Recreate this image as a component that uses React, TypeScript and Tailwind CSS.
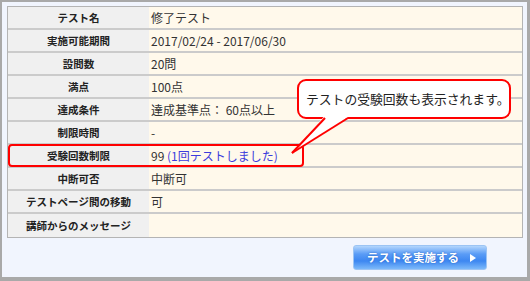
const ROWS: { label: string; value: React.ReactNode }[] = [
  { label: "テスト名", value: "修了テスト" },
  { label: "実施可能期間", value: "2017/02/24 - 2017/06/30" },
  { label: "設問数", value: "20問" },
  { label: "満点", value: "100点" },
  { label: "達成条件", value: "達成基準点： 60点以上" },
  { label: "制限時間", value: "-" },
  {
    label: "受験回数制限",
    value: (
      <span>
        99 <span className="text-[#3c3cdc]">(1回テストしました)</span>
      </span>
    ),
  },
  { label: "中断可否", value: "中断可" },
  { label: "テストページ間の移動", value: "可" },
  { label: "講師からのメッセージ", value: "" },
];

function Callout() {
  return (
    <>
      <div className="absolute left-[295px] top-[77px] flex h-[40px] w-[214px] items-center whitespace-nowrap rounded-[9px] border-2 border-[#ff0000] bg-white pl-[7px] text-[12.8px] text-[#222]">
        テストの受験回数も表示されます。
      </div>
      <svg
        className="absolute left-[-2px] top-[-2px]"
        width="530"
        height="281"
        viewBox="0 0 530 281"
      >
        <polygon points="324,116.5 292,153 349,116.5" fill="#fff" />
        <line x1="325" y1="118" x2="292" y2="153" stroke="#ff0000" strokeWidth="2" />
        <line x1="348" y1="118" x2="292" y2="153" stroke="#ff0000" strokeWidth="2" />
      </svg>
    </>
  );
}

export default function App() {
  return (
    <div
      className="relative h-[281px] w-[530px] overflow-hidden border-b-4 border-l-2 border-r-[3px] border-t-2 border-[#a9a9a9] bg-[#f1f5fe] pl-[5px] pt-[4px]"
      style={{ fontFamily: '"Noto Sans CJK JP", "Noto Sans", sans-serif' }}
    >
      <div className="w-[516px] border border-[#b4b4b4]">
        {ROWS.map((row, i) => (
          <div
            key={row.label}
            className={
              "flex h-[23px] " +
              (i < ROWS.length - 1 ? "border-b-2 border-[#cbcbcb]" : "")
            }
          >
            <div className="flex w-[141px] items-center justify-center bg-[#f0f0f0] text-[10.5px] font-bold text-[#222]">
              {row.label}
            </div>
            <div className="flex flex-1 items-center bg-[#fff9eb] pl-[2px] text-[12px] text-[#333]">
              {row.value}
            </div>
          </div>
        ))}
      </div>

      <div className="mr-[40px] mt-[7px] flex justify-end">
        <button className="flex h-[25px] w-[134px] items-center rounded-[3px] border border-[#9cc4f4] bg-[linear-gradient(#b3d6fd_0%,#5a9cf6_35%,#3d87f1_65%,#7cb9fa_100%)] pl-[13px] pr-[10px] text-[11.5px] font-bold text-white [text-shadow:0_0_2px_rgba(0,60,160,0.6)]">
          <span>テストを実施する</span>
          <svg className="ml-auto" width="6" height="8" viewBox="0 0 6 8">
            <polygon points="0,0 6,4 0,8" fill="#fff" />
          </svg>
        </button>
      </div>

      <div className="absolute left-[6px] top-[142px] h-[23px] w-[296px] rounded-[4px] border-2 border-[#ff0000]" />
      <Callout />
    </div>
  );
}
